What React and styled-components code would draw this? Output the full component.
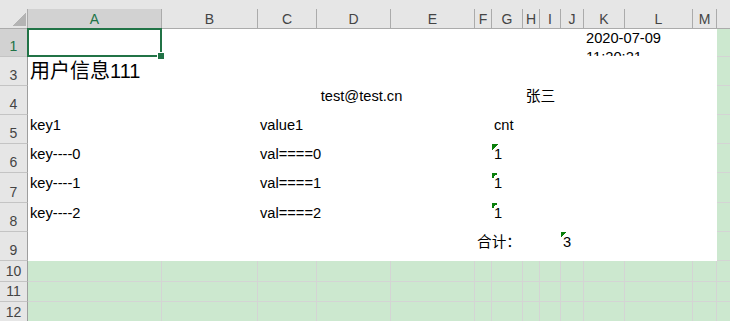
import React from 'react';
import styled, {createGlobalStyle} from 'styled-components';

const GlobalStyle = createGlobalStyle`
    body {
        margin:0;
        overflow:hidden;
        background:#e6e6e6;
        font-family:"Liberation Sans", "Noto Sans CJK SC", sans-serif;
    }
`

// [header label, width]; the last column runs past the window edge
const COLS = [
    ['A', 134], ['B', 96], ['C', 59], ['D', 74], ['E', 84], ['F', 17], ['G', 31],
    ['H', 17], ['I', 21], ['J', 23], ['K', 41], ['L', 68], ['M', 24], ['', 70],
]

const ROWS = [
    {n:1, h:28, selected:true, cells:{K:{span:2, wrap:true, text:'2020-07-09 11:20:21'}}},
    {n:3, h:29, cells:{A:{big:true, text:'用户信息111'}}},
    {n:4, h:29, cells:{C:{span:3, align:'center', pr:11, text:'test@test.cn'}, G:{span:4, align:'center', pl:4, text:'张三'}}},
    {n:5, h:29, cells:{A:{text:'key1'}, C:{text:'value1'}, G:{text:'cnt'}}},
    {n:6, h:29, cells:{A:{text:'key----0'}, C:{text:'val====0'}, G:{flag:true, text:'1'}}},
    {n:7, h:30, cells:{A:{text:'key----1'}, C:{text:'val====1'}, G:{flag:true, text:'1'}}},
    {n:8, h:29, cells:{A:{text:'key----2'}, C:{text:'val====2'}, G:{flag:true, text:'1'}}},
    {n:9, h:29, cells:{F:{text:'合计：'}, J:{flag:true, text:'3'}}},
    {n:10, h:21, blank:true},
    {n:11, h:20, blank:true},
    {n:12, h:21, blank:true},
]

const TopStrip = styled.div`
    height:9px;
    background:#e6e6e6;
`

const Sheet = styled.div`
    display:grid;
    grid-template-columns: 28px ${COLS.map(c => c[1] + 'px').join(' ')};
    grid-template-rows: 20px ${ROWS.map(r => r.h + 'px').join(' ')};
    width:max-content;
`

const Corner = styled.div`
    box-sizing:border-box;
    border-right:1px solid #ababab;
    border-bottom:1px solid #ababab;
    background:#e6e6e6 linear-gradient(135deg, transparent 50%, #b4b4b4 50%) no-repeat right 1px bottom 2px / 14px 14px;
`

const ColHeader = styled.div`
    box-sizing:border-box;
    display:flex;
    justify-content:center;
    padding-top:1px;
    line-height:18px;
    font-size:14px;
    border-right:1px solid #ababab;
    border-bottom:1px solid ${p => p.$active ? '#217346' : '#ababab'};
    background:${p => p.$active ? '#d2d2d2' : '#e6e6e6'};
    color:${p => p.$active ? '#217346' : '#444'};
`

const RowHeader = styled.div`
    box-sizing:border-box;
    display:flex;
    justify-content:center;
    align-items:flex-end;
    padding-bottom:2px;
    line-height:16px;
    font-size:14px;
    border-right:1px solid #9e9e9e;
    border-bottom:1px solid #c4c4c4;
    background:${p => p.$active ? '#d2d2d2' : '#e6e6e6'};
    color:${p => p.$active ? '#217346' : '#444'};
`

const Cell = styled.div`
    box-sizing:border-box;
    grid-column: span ${p => p.$span || 1};
    position:${p => p.$selected ? 'relative' : 'static'};
    z-index:${p => p.$selected ? 2 : p.$filled ? 1 : 'auto'};
    background:${p => p.$blank ? '#cce8cf' : '#fff'};
    border-right:1px solid ${p => p.$blank && p.$grid ? '#d4d4d4' : 'transparent'};
    border-bottom:1px solid ${p => p.$blank ? '#d4d4d4' : 'transparent'};
    padding:${p => p.$wrap ? '0' : '1px'} ${p => p.$pr || 0}px 0 ${p => 2 + (p.$pl || 0)}px;
    color:#000;
    font-size:${p => p.$big ? '20px' : '14.67px'};
    line-height:${p => p.$big ? '26px' : '19px'};
    text-align:${p => p.$align || 'left'};
    white-space:${p => p.$wrap ? 'normal' : 'nowrap'};
    overflow:${p => p.$wrap ? 'hidden' : 'visible'};
    ${p => p.$flag && `
        background-image:linear-gradient(135deg, #0a7f0a 50%, transparent 50%);
        background-repeat:no-repeat;
        background-size:6px 6px;
        background-position:0 0;
    `}
`

const Selection = styled.div`
    position:absolute;
    top:-1px;
    left:-1px;
    right:-1px;
    bottom:-1px;
    border:2px solid #217346;
`

const Handle = styled.div`
    position:absolute;
    right:-4px;
    bottom:-4px;
    width:6px;
    height:6px;
    background:#217346;
    border:1px solid #fff;
`

const renderRow = (row) => {
    const out = [
        <RowHeader key={'h' + row.n} $active={row.selected}>{row.n}</RowHeader>
    ];
    let skip = 0;
    COLS.forEach(([name]) => {
        if (skip > 0) { skip--; return; }
        const isEdge = name === '';
        const data = (row.cells || {})[name];
        const blank = row.blank || isEdge;
        if (data && data.span) skip = data.span - 1;
        const selected = row.selected && name === 'A';
        out.push(
            <Cell
                key={row.n + '-' + (name || 'edge')}
                $blank={blank}
                $grid={row.blank}
                $selected={selected}
                $filled={!!data}
                $span={data && data.span}
                $big={data && data.big}
                $wrap={data && data.wrap}
                $align={data && data.align}
                $pl={data && data.pl}
                $pr={data && data.pr}
                $flag={data && data.flag}
            >
                {data && data.text}
                {selected && <><Selection/><Handle/></>}
            </Cell>
        );
    });
    return out;
}

const App = () => {
    return (
        <>
            <GlobalStyle/>
            <TopStrip/>
            <Sheet>
                <Corner/>
                {COLS.map(([name], i) => (
                    <ColHeader key={'c' + i} $active={name === 'A'}>{name}</ColHeader>
                ))}
                {ROWS.map(renderRow)}
            </Sheet>
        </>
    )
}

export default App;
